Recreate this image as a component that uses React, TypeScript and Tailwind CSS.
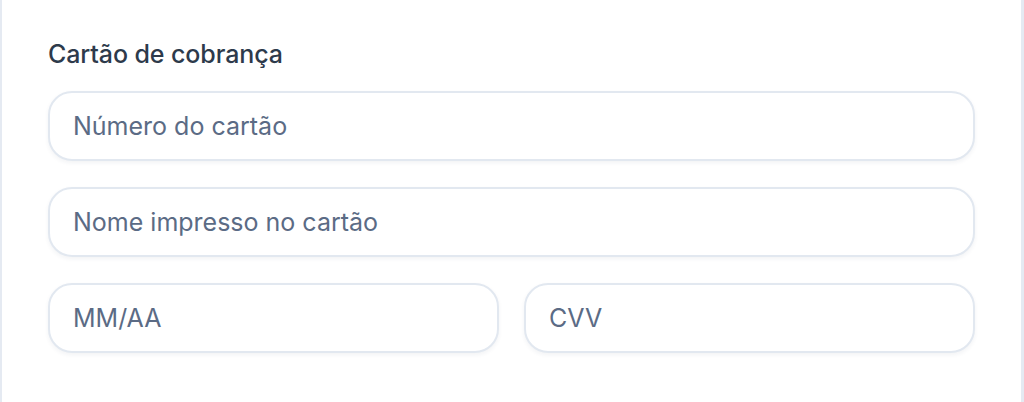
export default function App() {
  const field =
    "w-full h-[70px] rounded-[24px] border-2 border-[#e2e8f0] bg-white px-[23px] text-[25px] text-[#2d3748] placeholder:text-[#5b6b85] outline-none shadow-[0_2px_4px_rgba(30,50,90,0.06)]";

  return (
    <div
      className="min-h-[402px] w-full bg-white border-l-2 border-r-[3px] border-[#e5eaf2] px-[46px] pt-[36px]"
      style={{ fontFamily: "Inter, 'Noto Sans', sans-serif" }}
    >
      <h3 className="text-[25px] leading-[36px] font-medium text-[#2d3a4b] mb-[19px] tracking-[-0.1px]">
        Cartão de cobrança
      </h3>
      <div className="flex flex-col gap-[26px]">
        <input className={field} placeholder="Número do cartão" />
        <input className={field} placeholder="Nome impresso no cartão" />
        <div className="flex gap-[25px]">
          <input className={field} placeholder="MM/AA" />
          <input className={field} placeholder="CVV" />
        </div>
      </div>
    </div>
  );
}
